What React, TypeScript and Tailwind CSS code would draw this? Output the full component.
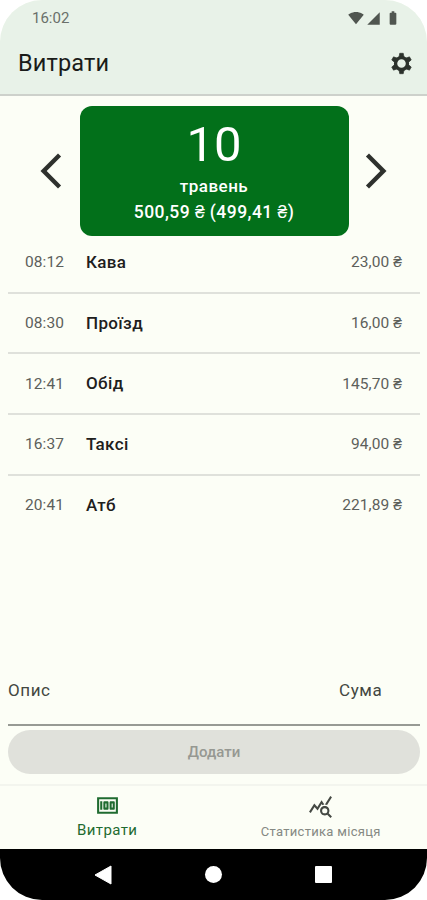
import {
  MdArrowBackIosNew,
  MdArrowForwardIos,
  MdBatteryFull,
  MdOutlineMoney,
  MdOutlineQueryStats,
  MdSignalCellular4Bar,
  MdSignalWifi4Bar,
} from 'react-icons/md';

interface Expense {
  time: string;
  title: string;
  amount: string;
}

const EXPENSES: Expense[] = [
  { time: '08:12', title: 'Кава', amount: '23,00 ₴' },
  { time: '08:30', title: 'Проїзд', amount: '16,00 ₴' },
  { time: '12:41', title: 'Обід', amount: '145,70 ₴' },
  { time: '16:37', title: 'Таксі', amount: '94,00 ₴' },
  { time: '20:41', title: 'Атб', amount: '221,89 ₴' },
];

const GEAR_ANGLES = [0, 60, 120, 180, 240, 300];

export default function App() {
  return (
    <div className="w-[427px] h-[900px] bg-white font-['Roboto','Liberation_Sans',sans-serif]">
      <div className="h-full flex flex-col overflow-hidden rounded-[42px] bg-[#fcfef6]">
        <Header />
        <DayPicker />
        <ExpenseList items={EXPENSES} />
        <AddForm />
        <BottomTabs />
        <SystemNav />
      </div>
    </div>
  );
}

function GearIcon() {
  return (
    <svg width="25" height="25" viewBox="0 0 24 24" className="mb-px text-[#2c322c]">
      <circle cx="12" cy="12" r="5.7" fill="none" stroke="currentColor" strokeWidth="3.2" />
      {GEAR_ANGLES.map(a => (
        <path
          key={a}
          d="M10.3 2.2h3.4l.7 3.8h-4.8z"
          fill="currentColor"
          stroke="currentColor"
          strokeWidth="0.6"
          strokeLinejoin="round"
          transform={`rotate(${a} 12 12)`}
        />
      ))}
    </svg>
  );
}

function Header() {
  return (
    <header className="h-[96px] shrink-0 bg-[#e8f2e8] border-b-2 border-[#cdd1cb]">
      <div className="h-9 pl-8 pr-[26px] flex items-center justify-between text-[#6a706a]">
        <span className="text-[15px]">16:02</span>
        <div className="flex items-center text-[#505650]">
          <MdSignalWifi4Bar size={16} />
          <MdSignalCellular4Bar size={15} className="ml-[2px]" />
          <MdBatteryFull size={16} className="ml-[4px]" />
        </div>
      </div>
      <div className="h-[56px] pl-[18px] pr-[13px] flex items-center justify-between">
        <h1 className="text-[23.5px] tracking-[0.15px] text-[#1a1c19]">Витрати</h1>
        <GearIcon />
      </div>
    </header>
  );
}

function DayPicker() {
  return (
    <section className="shrink-0 mt-[10px] h-[130px] px-[30px] flex items-center justify-between text-[#2e312d]">
      <MdArrowBackIosNew size={42} />
      <div className="w-[269px] h-full ml-px rounded-[12px] bg-[#02701a] text-white flex flex-col items-center">
        <div className="mt-[10px] text-[49px] leading-[58px]">10</div>
        <div className="text-[17px] leading-[24px] tracking-[0.5px] font-medium">травень</div>
        <div className="text-[17.5px] leading-[28px] tracking-[0.45px] font-medium">500,59 ₴ (499,41 ₴)</div>
      </div>
      <MdArrowForwardIos size={42} />
    </section>
  );
}

function ExpenseList({ items }: { items: Expense[] }) {
  return (
    <ul className="flex-1 pl-2 pr-[7px] -mt-[3px]">
      {items.map((e, i) => (
        <li
          key={e.time}
          className={`h-[60.7px] pl-[17px] pr-[18px] flex items-center text-[#5c605b] ${
            i < items.length - 1 ? 'pt-px border-b-2 border-[#dfe1db]' : 'pb-px'
          }`}
        >
          <span className="w-[61px] text-[15.5px] tracking-[0.1px]">{e.time}</span>
          <span className="flex-1 text-[17px] tracking-[0.35px] font-medium text-[#1e201d]">{e.title}</span>
          <span className="text-[15.5px] tracking-[0.1px]">{e.amount}</span>
        </li>
      ))}
    </ul>
  );
}

function AddForm() {
  return (
    <div className="shrink-0 pl-2 pr-[7px] pb-[10px]">
      <div className="h-[71px] mb-[4px] pt-[3px] flex items-center border-b-2 border-[#979a94] text-[17px] tracking-[0.6px] text-[#434741]">
        <span className="flex-1">Опис</span>
        <span className="w-[81px]">Сума</span>
      </div>
      <button className="w-full h-[44px] rounded-full bg-[#e0e1db] text-[15px] font-medium text-[#969892]">
        Додати
      </button>
    </div>
  );
}

function BottomTabs() {
  return (
    <nav className="shrink-0 h-[65px] grid grid-cols-2 border-t-2 border-[#f3f5ee]">
      <div className="flex flex-col items-center pt-[7px] pl-px text-[#1f6b30]">
        <MdOutlineMoney size={25} />
        <span className="text-[15px] leading-[24px] tracking-[0.4px]">Витрати</span>
      </div>
      <div className="flex flex-col items-center pt-[8px] pl-px text-[#454944]">
        <MdOutlineQueryStats size={25} />
        <span className="text-[13px] leading-[25px] tracking-[0.3px] text-[#858983]">Статистика місяця</span>
      </div>
    </nav>
  );
}

function SystemNav() {
  return (
    <div className="shrink-0 h-[51px] pl-[94px] pr-[95px] flex items-center justify-between bg-black text-white">
      <svg width="18" height="20" viewBox="0 0 18 20" fill="currentColor">
        <path d="M17 1v18L1 10z" stroke="currentColor" strokeLinejoin="round" />
      </svg>
      <div className="size-[17px] rounded-full bg-white" />
      <div className="size-[17px] rounded-[1px] bg-white" />
    </div>
  );
}
